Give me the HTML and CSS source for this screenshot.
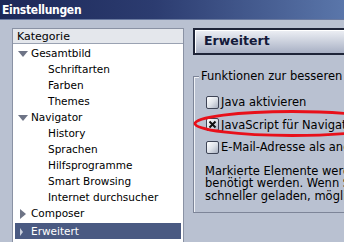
FILE: index.html
```html
<!DOCTYPE html>
<html>
<head>
<meta charset="utf-8">
<link rel="stylesheet" href="styles.css">
</head>
<body>
<div class="window">
  <div class="titlebar">Einstellungen</div>
  <div class="main">
    <div class="tree">
      <div class="tree-head">Kategorie</div>
      <ul class="tree-list">
        <li class="row top"><span class="tw open"></span>Gesamtbild</li>
        <li class="row child">Schriftarten</li>
        <li class="row child">Farben</li>
        <li class="row child">Themes</li>
        <li class="row top"><span class="tw open"></span>Navigator</li>
        <li class="row child">History</li>
        <li class="row child">Sprachen</li>
        <li class="row child">Hilfsprogramme</li>
        <li class="row child">Smart Browsing</li>
        <li class="row child">Internet durchsucher</li>
        <li class="row top"><span class="tw closed"></span>Composer</li>
        <li class="row top sel"><span class="tw closed"></span>Erweitert</li>
      </ul>
    </div>
    <div class="pane">
      <div class="pane-head">Erweitert</div>
      <div class="group">
        <div class="legend">Funktionen zur besseren Nav</div>
        <div class="opt"><span class="cb"></span>Java aktivieren</div>
        <div class="opt"><span class="cb"><svg width="11" height="11" viewBox="0 0 11 11"><path d="M2.5 2.5 L8.5 8.5 M8.5 2.5 L2.5 8.5" stroke="#111" stroke-width="2" fill="none"/></svg></span>JavaScript für Navigator</div>
        <div class="opt"><span class="cb"></span>E-Mail-Adresse als anon</div>
        <p class="note">Markierte Elemente werden<br>benötigt werden. Wenn Sie<br>schneller geladen, möglich</p>
      </div>
      <svg class="mark" width="170" height="30" viewBox="0 0 170 30"><ellipse cx="99" cy="14.5" rx="97" ry="12" fill="none" stroke="#e8101a" stroke-width="2.8"/></svg>
    </div>
  </div>
</div>
</body>
</html>
```

FILE: styles.css
```css
html, body {
  margin: 0;
  padding: 0;
  width: 344px;
  height: 242px;
  overflow: hidden;
  background: #b9c1d1;
  font-family: "DejaVu Sans", Verdana, sans-serif;
  font-size: 10.5px;
  color: #000;
}
.window {
  width: 344px;
  height: 242px;
  overflow: hidden;
}
.titlebar {
  height: 20px;
  box-sizing: border-box;
  padding: 3px 0 0 2px;
  background: linear-gradient(90deg, #1c2858 0%, #2c3c70 45%, #5a76aa 100%);
  color: #fff;
  font-family: "DejaVu Sans Condensed", "DejaVu Sans", sans-serif;
  font-weight: bold;
  font-size: 12px;
  letter-spacing: -0.3px;
  line-height: 14px;
  border-bottom: 1px solid #6a7aa0;
}
.main {
  display: flex;
  gap: 9px;
  padding: 8px 0 0 12px;
}
.tree {
  width: 170px;
  flex: none;
  background: #fff;
  border: 1px solid #8a92a4;
  border-bottom: none;
  height: 240px;
}
.tree-head {
  height: 15px;
  box-sizing: border-box;
  background: #e4e7ec;
  border-bottom: 1px solid #9aa2b2;
  padding: 1px 0 0 4px;
  font-size: 11px;
  line-height: 13px;
}
.tree-list {
  list-style: none;
  margin: 0;
  padding: 1px 2px 0 2px;
}
.row {
  height: 16px;
  line-height: 15px;
  white-space: nowrap;
  display: flex;
  align-items: center;
}
.row.top { padding-left: 2px; }
.row.child { padding-left: 33px; }
.row.sel {
  background: #4a5a82;
  color: #fff;
  margin: 2px 0 0 0;
}
.tw {
  width: 11px;
  height: 11px;
  margin-right: 3px;
  position: relative;
  flex: none;
}
.tw.open::before {
  content: "";
  position: absolute;
  left: 1px;
  top: 3px;
  border-left: 5px solid transparent;
  border-right: 5px solid transparent;
  border-top: 6px solid #6e7486;
}
.tw.closed::before {
  content: "";
  position: absolute;
  left: 3px;
  top: 1px;
  border-top: 5px solid transparent;
  border-bottom: 5px solid transparent;
  border-left: 6px solid #6e7486;
}
.row.sel .tw.closed::before {
  border-left-color: #c8cedc;
  border-top-width: 4px;
  border-bottom-width: 4px;
  border-left-width: 3px;
  top: 2px;
}
.pane {
  flex: 1;
  position: relative;
  min-width: 0;
}
.pane-head {
  height: 27px;
  box-sizing: border-box;
  border: 2px solid #1e2438;
  border-right: none;
  background: linear-gradient(180deg, #eef0f5 0%, #c4cad8 60%, #a8b0c4 100%);
  color: #141a3a;
  font-weight: bold;
  font-size: 12.5px;
  line-height: 22px;
  padding-left: 9px;
  box-shadow: inset 1px 1px 0 #fff;
}
.group {
  margin-top: 21px;
  height: 137px;
  box-sizing: border-box;
  border: 1px solid #7d8598;
  border-right: none;
  box-shadow: inset 1px 1px 0 #eef1f6;
  position: relative;
  padding: 14px 0 0 12px;
  white-space: nowrap;
}
.legend {
  position: absolute;
  top: -7px;
  left: 5px;
  background: #b9c1d1;
  padding: 0 2px;
  font-size: 11.5px;
  line-height: 13px;
}
.opt {
  display: flex;
  align-items: center;
  height: 22.5px;
  font-size: 11.5px;
}
.cb {
  width: 11px;
  height: 11px;
  border: 1px solid #3e4456;
  border-radius: 2px;
  background: linear-gradient(135deg, #ffffff 0%, #dfe3ea 50%, #a8b0c0 100%);
  margin-right: 2px;
  flex: none;
  display: flex;
}
.note {
  margin: 6px 0 0 -1px;
  font-size: 11.5px;
  line-height: 12.5px;
}
.mark {
  position: absolute;
  left: 0;
  top: 81px;
}
```
